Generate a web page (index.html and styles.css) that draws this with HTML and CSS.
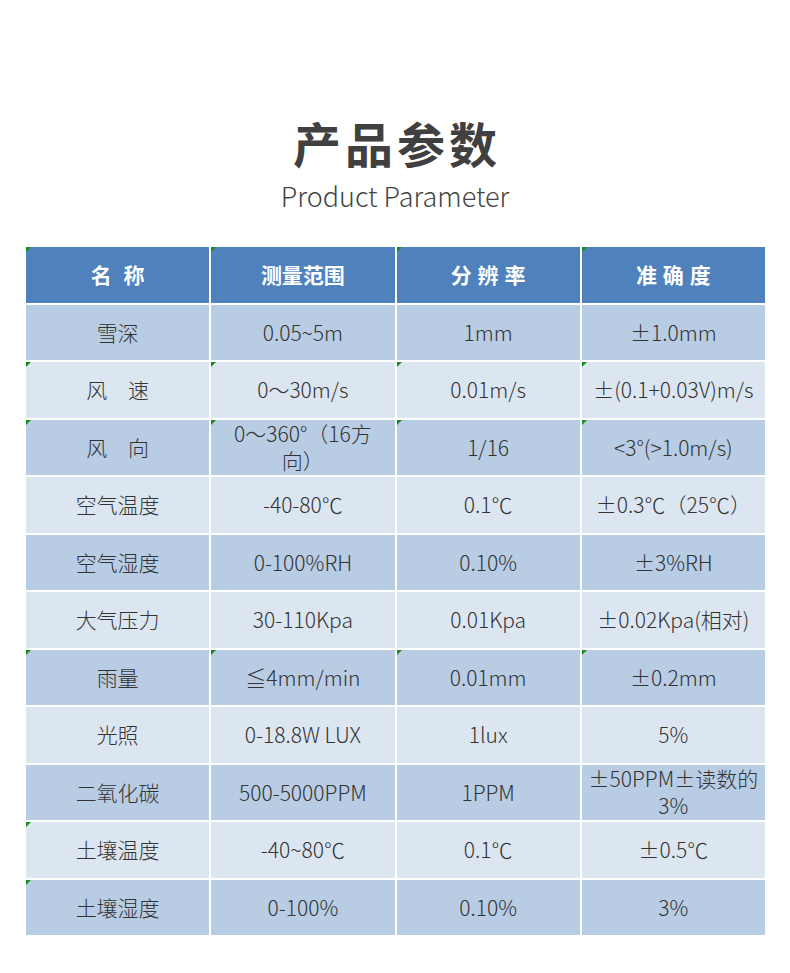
FILE: index.html
```html
<!DOCTYPE html>
<html lang="zh-CN">
<head>
<meta charset="utf-8">
<title>产品参数</title>
<link rel="stylesheet" href="styles.css">
</head>
<body>
<div class="page">
  <div class="heading">
    <h1 class="title">产品参数</h1>
    <div class="subtitle">Product Parameter</div>
  </div>
  <div class="table">
    <div class="cell head mark"><span class="sp-wide">名称</span></div>
    <div class="cell head mark">测量范围</div>
    <div class="cell head mark"><span class="sp">分辨率</span></div>
    <div class="cell head mark"><span class="sp">准确度</span></div>

    <div class="cell dark">雪深</div>
    <div class="cell dark">0.05~5m</div>
    <div class="cell dark">1mm</div>
    <div class="cell dark">±1.0mm</div>

    <div class="cell light mark">风　速</div>
    <div class="cell light mark">0～30m/s</div>
    <div class="cell light mark">0.01m/s</div>
    <div class="cell light mark">±(0.1+0.03V)m/s</div>

    <div class="cell dark mark">风　向</div>
    <div class="cell dark mark two">0～360°（16方<br>向）</div>
    <div class="cell dark mark">1/16</div>
    <div class="cell dark mark">&lt;3°(&gt;1.0m/s)</div>

    <div class="cell light">空气温度</div>
    <div class="cell light">-40-80℃</div>
    <div class="cell light">0.1℃</div>
    <div class="cell light">±0.3℃（25℃）</div>

    <div class="cell dark">空气湿度</div>
    <div class="cell dark">0-100%RH</div>
    <div class="cell dark">0.10%</div>
    <div class="cell dark">±3%RH</div>

    <div class="cell light">大气压力</div>
    <div class="cell light">30-110Kpa</div>
    <div class="cell light">0.01Kpa</div>
    <div class="cell light">±0.02Kpa(相对)</div>

    <div class="cell dark mark">雨量</div>
    <div class="cell dark mark">≦4mm/min</div>
    <div class="cell dark mark">0.01mm</div>
    <div class="cell dark mark">±0.2mm</div>

    <div class="cell light">光照</div>
    <div class="cell light">0-18.8W LUX</div>
    <div class="cell light">1lux</div>
    <div class="cell light">5%</div>

    <div class="cell dark">二氧化碳</div>
    <div class="cell dark">500-5000PPM</div>
    <div class="cell dark">1PPM</div>
    <div class="cell dark two">±50PPM±读数的<br>3%</div>

    <div class="cell light mark">土壤温度</div>
    <div class="cell light">-40~80℃</div>
    <div class="cell light">0.1℃</div>
    <div class="cell light">±0.5℃</div>

    <div class="cell dark mark">土壤湿度</div>
    <div class="cell dark">0-100%</div>
    <div class="cell dark">0.10%</div>
    <div class="cell dark">3%</div>
  </div>
</div>
</body>
</html>
```
FILE: styles.css
```css
html, body {
  margin: 0;
  padding: 0;
  background: #ffffff;
}

body {
  font-family: "Noto Sans CJK SC", "Noto Sans", sans-serif;
  color: #333333;
}

.page {
  width: 790px;
  padding-top: 112px;
}

.heading {
  display: flex;
  flex-direction: column;
  align-items: center;
}

.title {
  margin: 0;
  font-size: 48px;
  line-height: 60px;
  font-weight: 700;
  color: #404040;
  letter-spacing: 4px;
  padding-left: 4px;
}

.subtitle {
  margin-top: 9px;
  font-size: 27px;
  line-height: 30px;
  font-weight: 300;
  color: #454545;
}

.table {
  margin: 36px 25px 0 26px;
  display: grid;
  grid-template-columns: repeat(4, 1fr);
  grid-auto-rows: 55.5px;
  gap: 2px;
  background: #ffffff;
}

.cell {
  position: relative;
  display: flex;
  align-items: center;
  justify-content: center;
  text-align: center;
  padding: 0 2px;
  overflow: hidden;
  font-size: 21px;
  line-height: 29px;
  font-weight: 300;
  color: #333333;
}

.two {
  line-height: 27px;
}

.head {
  background: #4f81bd;
  color: #ffffff;
  font-weight: 700;
}

.dark {
  background: #b8cce4;
}

.light {
  background: #dce6f1;
}

.sp {
  letter-spacing: 6px;
  padding-left: 6px;
}

.sp-wide {
  letter-spacing: 12px;
  padding-left: 12px;
}

.mark::before {
  content: "";
  position: absolute;
  left: 0;
  top: 0;
  width: 0;
  height: 0;
  border-top: 5px solid #1a8a1a;
  border-right: 5px solid transparent;
}
```
